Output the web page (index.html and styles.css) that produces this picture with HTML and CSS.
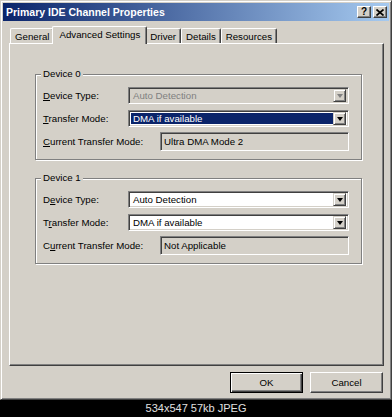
FILE: index.html
```html
<!DOCTYPE html>
<html lang="en">
<head>
  <meta charset="UTF-8" />
  <title>Primary IDE Channel Properties</title>
  <meta name="viewport" content="width=device-width, initial-scale=1.0" />
  <link rel="stylesheet" href="styles.css">
</head>
<body>

  <div class="window">
    <div class="titlebar">
      <span class="title">Primary IDE Channel Properties</span>
      <div class="title-buttons">
        <span class="tbtn help">?</span>
        <span class="tbtn close">
          <svg width="8" height="7" viewBox="0 0 8 7">
            <path d="M0.5 0.5 L7.5 6.5 M7.5 0.5 L0.5 6.5" stroke="#000" stroke-width="1.7" fill="none" />
          </svg>
        </span>
      </div>
    </div>

    <div class="content">
      <div class="tabs">
        <span class="tab">General</span>
        <span class="tab active">Advanced Settings</span>
        <span class="tab">Driver</span>
        <span class="tab">Details</span>
        <span class="tab">Resources</span>
      </div>

      <div class="panel">
        <div class="group">
          <span class="legend">Device 0</span>
          <div class="row">
            <label class="label"><u>D</u>evice Type:</label>
            <div class="combo disabled">
              <span class="value">Auto Detection</span>
              <span class="drop"></span>
            </div>
          </div>
          <div class="row">
            <label class="label"><u>T</u>ransfer Mode:</label>
            <div class="combo">
              <span class="value selected">DMA if available</span>
              <span class="drop"></span>
            </div>
          </div>
          <div class="row">
            <label class="label wide"><u>C</u>urrent Transfer Mode:</label>
            <div class="readonly">Ultra DMA Mode 2</div>
          </div>
        </div>

        <div class="group">
          <span class="legend">Device 1</span>
          <div class="row">
            <label class="label">D<u>e</u>vice Type:</label>
            <div class="combo">
              <span class="value">Auto Detection</span>
              <span class="drop"></span>
            </div>
          </div>
          <div class="row">
            <label class="label">T<u>r</u>ansfer Mode:</label>
            <div class="combo">
              <span class="value">DMA if available</span>
              <span class="drop"></span>
            </div>
          </div>
          <div class="row">
            <label class="label wide">C<u>u</u>rrent Transfer Mode:</label>
            <div class="readonly">Not Applicable</div>
          </div>
        </div>
      </div>

      <div class="buttons">
        <button class="btn default">OK</button>
        <button class="btn">Cancel</button>
      </div>
    </div>
  </div>

  <div class="caption">534x547 57kb JPEG</div>

</body>
</html>
```

FILE: styles.css
```css
body {
  margin: 0;
  background: #000;
  font-family: 'Liberation Sans', Arial, sans-serif;
  font-size: 9.7px;
  color: #000;
}

.window {
  width: 392px;
  height: 400px;
  box-sizing: border-box;
  background: #d4d0c8;
  border: 1px solid;
  border-color: #d4d0c8 #404040 #404040 #d4d0c8;
  box-shadow: inset 1px 1px 0 #fff, inset -1px -1px 0 #808080;
  padding: 2px;
  display: flex;
  flex-direction: column;
}

.titlebar {
  height: 18px;
  background: linear-gradient(to right, #0a246a, #a6caf0);
  display: flex;
  align-items: center;
  justify-content: space-between;
  padding: 0 2px 0 3px;
}

.title {
  color: #fff;
  font-weight: bold;
  font-size: 10.5px;
}

.title-buttons {
  display: flex;
  gap: 2px;
}

.tbtn {
  width: 14px;
  height: 12px;
  box-sizing: border-box;
  background: #d4d0c8;
  border: 1px solid;
  border-color: #fff #404040 #404040 #fff;
  box-shadow: inset -1px -1px 0 #808080;
  display: flex;
  align-items: center;
  justify-content: center;
  font-weight: bold;
  font-size: 10px;
  line-height: 1;
}

.content {
  flex: 1;
  display: flex;
  flex-direction: column;
  padding: 5px 5px 4px 6px;
}

/* tabs */
.tabs {
  height: 17px;
  display: flex;
  align-items: flex-end;
  padding-left: 1px;
}

.tab {
  height: 15px;
  box-sizing: border-box;
  padding: 0 4px;
  border: 1px solid;
  border-bottom: none;
  border-color: #fff #404040 #fff #fff;
  border-radius: 2px 2px 0 0;
  box-shadow: inset -1px 0 0 #808080;
  display: flex;
  align-items: center;
}

.tab.active {
  height: 18px;
  margin: 0 -2px -1px;
  padding: 2px 6px 0;
  background: #d4d0c8;
  position: relative;
  z-index: 1;
  align-items: flex-start;
}

.panel {
  height: 323px;
  box-sizing: border-box;
  border: 1px solid;
  border-color: #fff #404040 #404040 #fff;
  box-shadow: inset -1px -1px 0 #808080;
  padding: 30px 21px 0 25px;
  display: flex;
  flex-direction: column;
  gap: 18px;
}

/* group boxes */
.group {
  position: relative;
  border: 1px solid #808080;
  box-shadow: inset 1px 1px 0 #fff, 1px 1px 0 #fff;
  padding: 11px 12px 8px 7px;
  display: flex;
  flex-direction: column;
  gap: 4px;
}

.legend {
  position: absolute;
  top: -7px;
  left: 5px;
  padding: 0 2px;
  background: #d4d0c8;
  line-height: 12px;
}

.row {
  height: 19px;
  display: flex;
  align-items: center;
}

.label {
  width: 85px;
  flex: none;
}

.label.wide {
  width: 117px;
}

.combo {
  flex: 1;
  height: 17px;
  box-sizing: border-box;
  display: flex;
  border: 1px solid;
  border-color: #808080 #fff #fff #808080;
  box-shadow: inset 1px 1px 0 #404040, inset -1px -1px 0 #d4d0c8;
  background: #fff;
  padding: 2px;
}

.value {
  flex: 1;
  padding-left: 2px;
  line-height: 11px;
}

.value.selected {
  background: #0a246a;
  color: #fff;
}

.drop {
  width: 13px;
  margin: -1px 0;
  box-sizing: border-box;
  background: #d4d0c8;
  border: 1px solid;
  border-color: #d4d0c8 #404040 #404040 #d4d0c8;
  box-shadow: inset 1px 1px 0 #fff, inset -1px -1px 0 #808080;
  display: flex;
  align-items: center;
  justify-content: center;
}

.drop::after {
  content: "";
  border-left: 3.5px solid transparent;
  border-right: 3.5px solid transparent;
  border-top: 4px solid #000;
}

.combo.disabled {
  background: #d4d0c8;
}

.combo.disabled .value {
  color: #808080;
}

.combo.disabled .drop::after {
  border-top-color: #808080;
}

.readonly {
  flex: 1;
  height: 19px;
  box-sizing: border-box;
  border: 1px solid;
  border-color: #808080 #fff #fff #808080;
  box-shadow: inset 1px 1px 0 #404040, inset -1px -1px 0 #d4d0c8;
  padding: 0 3px;
  display: flex;
  align-items: center;
}

/* bottom buttons */
.buttons {
  margin-top: 6px;
  display: flex;
  justify-content: flex-end;
  gap: 7px;
  padding-right: 1px;
}

.btn {
  width: 73px;
  height: 21px;
  box-sizing: border-box;
  background: #d4d0c8;
  border: 1px solid;
  border-color: #fff #404040 #404040 #fff;
  box-shadow: inset -1px -1px 0 #808080;
  font-family: 'Liberation Sans', Arial, sans-serif;
  font-size: 9.7px;
  color: #000;
  padding: 0;
}

.btn.default {
  border: 1px solid #000;
  box-shadow: inset 1px 1px 0 #fff, inset -1px -1px 0 #404040, inset -2px -2px 0 #808080;
}

.caption {
  height: 17px;
  line-height: 17px;
  text-align: center;
  color: #e0e0e0;
  font-size: 11px;
}
```
